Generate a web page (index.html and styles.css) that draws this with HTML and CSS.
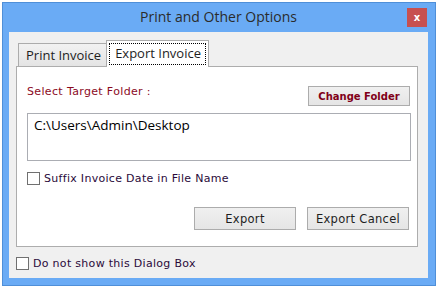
FILE: index.html
```html
<!DOCTYPE html>
<html lang="en">
<head>
    <meta charset="UTF-8">
    <title>Print and Other Options</title>
    <link rel="stylesheet" href="styles.css">
</head>
<body>
    <div class="window">
        <div class="titlebar">
            <span class="title">Print and Other Options</span>
            <button class="close">x</button>
        </div>
        <div class="client">
            <div class="tabs">
                <div class="tab">Print Invoice</div>
                <div class="tab active"><span class="focus">Export Invoice</span></div>
            </div>
            <div class="panel">
                <div class="folder-row">
                    <span class="label">Select Target Folder :</span>
                    <button class="btn btn-change">Change Folder</button>
                </div>
                <div class="path-box">C:\Users\Admin\Desktop</div>
                <label class="check">
                    <span class="box"></span>
                    Suffix Invoice Date in File Name
                </label>
                <div class="actions">
                    <button class="btn btn-action">Export</button>
                    <button class="btn btn-action">Export Cancel</button>
                </div>
            </div>
            <label class="check check-bottom">
                <span class="box"></span>
                Do not show this Dialog Box
            </label>
        </div>
    </div>
</body>
</html>
```

FILE: styles.css
```css
body {
    margin: 0;
    background-color: #ffffff;
    font-family: "DejaVu Sans", Tahoma, sans-serif;
}

.window {
    margin: 2px;
    border: 1px solid #4f8fd8;
    background-color: #6aabf5;
    display: flex;
    flex-direction: column;
    padding: 0 7px 7px 6px;
    width: 419px;
    height: 275px;
}

.titlebar {
    height: 29px;
    display: flex;
    align-items: center;
    justify-content: center;
    position: relative;
}

.title {
    font-family: "Open Sans", sans-serif;
    font-size: 14px;
    color: #2b2b2b;
    margin-top: -2px;
}

.close {
    position: absolute;
    right: 1px;
    top: 5px;
    width: 20px;
    height: 19px;
    border: none;
    padding: 0;
    background-color: #c75050;
    color: #ffffff;
    font-family: "DejaVu Sans", sans-serif;
    font-weight: bold;
    font-size: 10px;
    line-height: 17px;
}

.client {
    flex: 1;
    background-color: #f0f0f0;
    padding: 8px 10px 0 7px;
}

.tabs {
    display: flex;
    align-items: flex-end;
    height: 26px;
    padding-left: 2px;
    position: relative;
    z-index: 1;
}

.tab {
    font-family: "Open Sans", sans-serif;
    font-size: 13px;
    color: #1e1e1e;
    height: 23px;
    line-height: 23px;
    padding: 0 6px 0 7px;
    border: 1px solid #acacac;
    border-bottom: none;
    background: linear-gradient(#f2f2f2, #e4e4e4);
    box-sizing: border-box;
}

.tab.active {
    height: 27px;
    margin-left: -2px;
    margin-bottom: -1px;
    padding: 2px 2px 0 2px;
    background: #ffffff;
    line-height: 19px;
}

.focus {
    display: block;
    border: 1px dotted #000000;
    padding: 0 4px 0 5px;
    height: 22px;
    box-sizing: border-box;
}

.panel {
    background-color: #ffffff;
    border: 1px solid #adadad;
    height: 179px;
    padding: 0 7px 0 10px;
}

.folder-row {
    display: flex;
    justify-content: space-between;
    align-items: flex-start;
    margin-top: 19px;
}

.label {
    font-size: 11px;
    letter-spacing: 0.35px;
    color: #8b0a1e;
    margin-top: -1px;
}

.btn {
    font-family: "DejaVu Sans", sans-serif;
    font-size: 11.5px;
    letter-spacing: 0.3px;
    color: #1e1e1e;
    border: 1px solid #acacac;
    background: linear-gradient(#f0f0f0, #e5e5e5);
    padding: 0;
}

.btn-change {
    width: 102px;
    height: 20px;
    font-weight: bold;
    font-size: 10px;
    letter-spacing: 0;
    color: #800018;
}

.path-box {
    margin-top: 7px;
    width: 384px;
    height: 48px;
    box-sizing: border-box;
    border: 1px solid #abadb3;
    font-family: "Open Sans", sans-serif;
    font-size: 13.5px;
    color: #000000;
    padding: 2px 6px;
}

.check {
    display: flex;
    align-items: center;
    gap: 4px;
    font-size: 11px;
    letter-spacing: 0.3px;
    color: #2a0a3a;
    margin-top: 11px;
}

.box {
    width: 13px;
    height: 13px;
    box-sizing: border-box;
    border: 1px solid #707070;
    background-color: #ffffff;
}

.actions {
    display: flex;
    justify-content: flex-end;
    gap: 11px;
    margin-top: 22px;
    padding-right: 1px;
}

.btn-action {
    width: 102px;
    height: 23px;
}

.check-bottom {
    margin-top: 10px;
}
```
